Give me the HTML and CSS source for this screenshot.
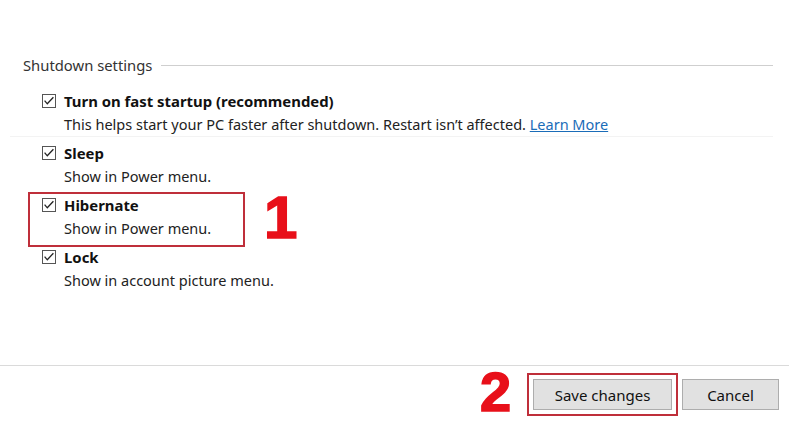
FILE: index.html
```html
<!DOCTYPE html>
<html lang="en">
<head>
<meta charset="utf-8">
<link rel="stylesheet" href="styles.css">
</head>
<body>
<div class="page">
  <main class="settings">
    <div class="group-head">
      <span class="group-title">Shutdown settings</span>
      <span class="group-rule"></span>
    </div>
    <div class="options">
      <div class="option option-first">
        <label class="opt-title"><span class="check"><svg viewBox="0 0 14 14" width="14" height="14"><path d="M2.6 6.6 L5.3 9.8 L11.4 3.2" fill="none" stroke="#222" stroke-width="1.3"/></svg></span>Turn on fast startup (recommended)</label>
        <div class="opt-desc">This helps start your PC faster after shutdown. Restart isn’t affected. <a class="link" href="#">Learn More</a></div>
      </div>
      <div class="option">
        <label class="opt-title"><span class="check"><svg viewBox="0 0 14 14" width="14" height="14"><path d="M2.6 6.6 L5.3 9.8 L11.4 3.2" fill="none" stroke="#222" stroke-width="1.3"/></svg></span>Sleep</label>
        <div class="opt-desc">Show in Power menu.</div>
      </div>
      <div class="option marked">
        <label class="opt-title"><span class="check"><svg viewBox="0 0 14 14" width="14" height="14"><path d="M2.6 6.6 L5.3 9.8 L11.4 3.2" fill="none" stroke="#222" stroke-width="1.3"/></svg></span>Hibernate</label>
        <div class="opt-desc">Show in Power menu.</div>
        <span class="anno-box anno-box-1"></span>
        <span class="anno-num anno-num-1">1</span>
      </div>
      <div class="option">
        <label class="opt-title"><span class="check"><svg viewBox="0 0 14 14" width="14" height="14"><path d="M2.6 6.6 L5.3 9.8 L11.4 3.2" fill="none" stroke="#222" stroke-width="1.3"/></svg></span>Lock</label>
        <div class="opt-desc">Show in account picture menu.</div>
      </div>
    </div>
  </main>
  <footer class="footer">
    <div class="btn-wrap">
      <span class="anno-num anno-num-2">2</span>
      <span class="anno-box anno-box-2"></span>
      <button class="btn">Save changes</button>
    </div>
    <button class="btn">Cancel</button>
  </footer>
</div>
</body>
</html>
```

FILE: styles.css
```css
* { box-sizing: border-box; }
html, body { margin: 0; padding: 0; background: #fff; }
body {
  font-family: "Noto Sans", "Open Sans", sans-serif;
  color: #222;
  font-size: 14.5px;
}
.page {
  width: 789px;
  height: 434px;
  display: flex;
  flex-direction: column;
  overflow: hidden;
}
.settings {
  flex: 1;
  padding: 54px 16px 0 23px;
}
.group-head {
  display: flex;
  align-items: center;
  height: 22px;
}
.group-title {
  color: #333;
  font-size: 14.8px;
}
.group-rule {
  flex: 1;
  height: 1px;
  background: #cfcfcf;
  margin-left: 9px;
}
.options {
  padding-left: 19px;
  margin-top: 13px;
}
.option {
  position: relative;
  height: 52px;
}
.option-first {
  height: 48px;
  margin-bottom: 4px;
  border-bottom: 1px solid #f3f3f3;
  margin-left: -32px;
  padding-left: 32px;
}
.opt-title {
  display: flex;
  align-items: center;
  height: 24px;
  font-weight: 700;
  font-size: 14.9px;
  color: #111;
}
.check {
  display: inline-flex;
  flex: none;
  width: 14px;
  height: 14px;
  border: 1px solid #555;
  margin-right: 8px;
  background: #fff;
}
.check svg { display: block; margin: -1px; }
.opt-desc {
  padding-left: 22px;
  height: 23px;
  line-height: 23px;
  color: #222;
}
.link {
  color: #1a6cb8;
  text-decoration: underline;
}
.anno-box {
  position: absolute;
  border: 2px solid #bf2f3a;
  pointer-events: none;
}
.anno-box-1 {
  left: -14px;
  top: -1px;
  width: 217px;
  height: 55px;
}
.anno-num {
  position: absolute;
  font-family: "Liberation Sans", Arial, sans-serif;
  font-weight: 700;
  color: #e8101a;
  -webkit-text-stroke: 1.6px #e8101a;
  line-height: 1;
}
.anno-num-1 {
  left: 222px;
  top: -5px;
  font-size: 60px;
}
.footer {
  height: 69px;
  border-top: 1px solid #dadada;
  display: flex;
  justify-content: flex-end;
  align-items: flex-start;
  padding: 13px 10px 0 0;
  gap: 10px;
}
.btn-wrap {
  position: relative;
}
.anno-box-2 {
  left: -6px;
  top: -6px;
  right: -6px;
  bottom: -6px;
}
.anno-num-2 {
  left: -53px;
  top: -15px;
  font-size: 56px;
}
.btn {
  display: block;
  height: 31px;
  background: #e1e1e1;
  border: 1px solid #adadad;
  font-family: "Noto Sans", "Open Sans", sans-serif;
  font-size: 15px;
  color: #111;
  padding: 0;
  margin: 0;
}
.btn-wrap .btn { width: 139px; }
.footer > .btn { width: 97px; }
```
